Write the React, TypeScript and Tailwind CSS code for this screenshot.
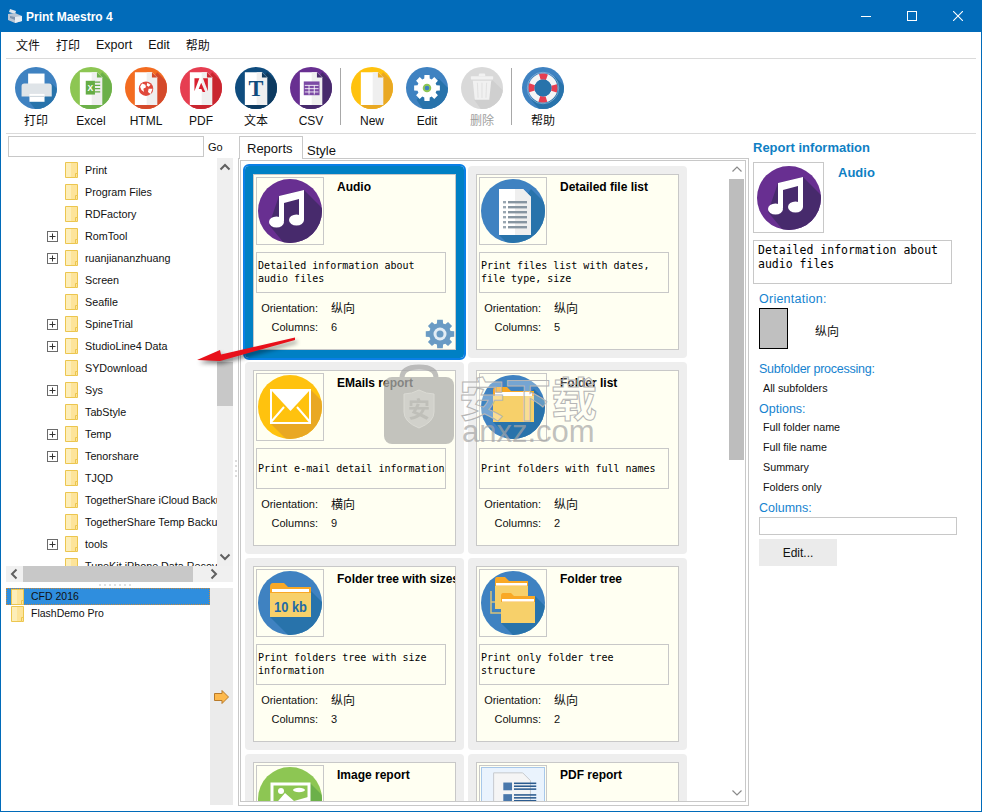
import type { ReactNode } from "react";

const UI = "font-['Liberation_Sans','Noto_Sans_CJK_SC',sans-serif]";
const MONO = "font-['DejaVu_Sans_Mono',monospace]";

const shadow = (x1: number, y1: number, x2: number, y2: number) =>
  `${x1},${y1} ${x1 + 80},${y1 + 80} ${x2 + 80},${y2 + 80} ${x2},${y2}`;

function gearPath(cx: number, cy: number, r1: number, r2: number, n: number) {
  const pts: string[] = [];
  for (let i = 0; i < n; i++) {
    const a = (i / n) * Math.PI * 2;
    const s = Math.PI / n;
    const p = (ang: number, r: number) =>
      `${(cx + Math.cos(ang) * r).toFixed(2)},${(cy + Math.sin(ang) * r).toFixed(2)}`;
    pts.push(p(a - s * 0.5, r2), p(a + s * 0.5, r2), p(a + s * 0.72, r1), p(a + s * 1.28, r1));
  }
  return `M${pts.join(" L")} Z`;
}

function Badge({ bg, size, children }: { bg: string; size: string; children: ReactNode }) {
  return (
    <div className={`${size} rounded-full overflow-hidden shrink-0`}>
      <svg viewBox="0 0 64 64" className="w-full h-full block">
        <rect width="64" height="64" fill={bg} />
        {children}
      </svg>
    </div>
  );
}

const BLUE = "#3f82c1";
const BLUE_SH = "#2873ab";

function Doc({ sh }: { sh: string }) {
  return (
    <>
      <polygon points={`49,8 ${49 + 80},88 95,138 15,58`} fill={sh} />
      <path d="M15 8H41L49 16V58H15Z" fill="#ffffff" />
      <path d="M33 8H41L49 16V58H33Z" fill="#efefef" />
      <path d="M41 8L49 16H41Z" fill={sh} />
    </>
  );
}

function PrinterIcon({ size }: { size: string }) {
  return (
    <Badge bg={BLUE} size={size}>
      <polygon points="56,25 110,79 78,125 22,53" fill={BLUE_SH} />
      <rect x="20" y="10" width="25" height="16" fill="#ffffff" />
      <path d="M10 29Q10 25 14 25H52Q56 25 56 29V45H10Z" fill="#dfe4e8" />
      <rect x="22" y="41" width="23" height="12" fill="#ffffff" />
      <rect x="22" y="44" width="23" height="1.5" fill="#c9d2d9" />
    </Badge>
  );
}

function ExcelIcon({ size }: { size: string }) {
  return (
    <Badge bg="#8dc653" size={size}>
      <Doc sh="#6cb04a" />
      <path d="M38 23H46M38 28H46M38 33H46M38 38H46" stroke="#65ad45" strokeWidth="2" />
      <rect x="24" y="21" width="14" height="21" fill="#65ad45" />
      <text x="31" y="36" textAnchor="middle" fontSize="13" fontWeight="700" fill="#fff" fontFamily="Liberation Sans">X</text>
    </Badge>
  );
}

function HtmlIcon({ size }: { size: string }) {
  return (
    <Badge bg="#f36c21" size={size}>
      <Doc sh="#d4492a" />
      <circle cx="32" cy="33" r="11" fill="#e0493c" />
      <path d="M26 25l5 2 1 4-4 2 1 5-4-3-2-5ZM34 24l5 3-3 3-3-2ZM36 33l6 0-3 8-4-3Z" fill="#fff" />
    </Badge>
  );
}

function PdfIcon({ size }: { size: string }) {
  return (
    <Badge bg="#e63e51" size={size}>
      <Doc sh="#c9262f" />
      <path d="M22 17H29.5L22 37ZM35 17H42.5V37ZM32.3 24L38.5 38H34.5L32.6 33.5H28.4Z" fill="#d8202f" />
    </Badge>
  );
}

function TextIcon({ size }: { size: string }) {
  return (
    <Badge bg="#0f4c7e" size={size}>
      <Doc sh="#0d3a60" />
      <text x="32" y="44" textAnchor="middle" fontSize="34" fontWeight="700" fill="#0f4c7e" fontFamily="Liberation Serif">T</text>
    </Badge>
  );
}

function CsvIcon({ size }: { size: string }) {
  return (
    <Badge bg="#682f91" size={size}>
      <Doc sh="#472a6c" />
      <rect x="21" y="22" width="24" height="21" fill="#7c4aa5" />
      <path d="M22.5 28h21M22.5 33h21M22.5 38h21M29 28v14M37 28v14" stroke="#fff" strokeWidth="1.3" />
    </Badge>
  );
}

function NewIcon({ size }: { size: string }) {
  return (
    <Badge bg="#ffc20e" size={size}>
      <Doc sh="#e9a823" />
    </Badge>
  );
}

function EditIcon({ size }: { size: string }) {
  return (
    <Badge bg={BLUE} size={size}>
      <polygon points="50,18 110,78 64,122 16,50" fill={BLUE_SH} />
      <path d={gearPath(32, 32, 15, 20, 8)} fill="#fff" />
      <circle cx="32" cy="32" r="6.5" fill="#8dc653" />
      <circle cx="32" cy="32" r="3.5" fill={BLUE} />
    </Badge>
  );
}

function TrashIcon({ size }: { size: string }) {
  return (
    <Badge bg="#d9d9d9" size={size}>
      <polygon points="48,20 110,80 70,120 20,50" fill="#cfcfcf" />
      <path d="M27 12Q27 10 29 10H35Q37 10 37 12V14H27Z" fill="#f1f1f1" />
      <rect x="15" y="14" width="34" height="5" rx="1" fill="#f1f1f1" />
      <path d="M18 21H46L43 50H21Z" fill="#f1f1f1" />
      <path d="M25 24l1 23M32 24v23M39 24l-1 23" stroke="#dcdcdc" strokeWidth="1.2" />
    </Badge>
  );
}

function HelpIcon({ size }: { size: string }) {
  return (
    <Badge bg={BLUE} size={size}>
      <polygon points="50,14 110,74 74,120 14,50" fill={BLUE_SH} />
      <circle cx="32" cy="32" r="24" fill="none" stroke="#9dbfdc" strokeWidth="1" />
      <circle cx="32" cy="32" r="17.5" fill="none" stroke="#f5f5f5" strokeWidth="9" />
      <circle cx="32" cy="32" r="17.5" fill="none" stroke="#e63e51" strokeWidth="9" strokeDasharray="11 16.5" strokeDashoffset="5.5" />
      <circle cx="32" cy="32" r="13" fill={BLUE_SH} />
    </Badge>
  );
}

function AudioIcon({ size }: { size: string }) {
  return (
    <Badge bg="#682f91" size={size}>
      <polygon points="21,17 46,11 100,65 60,105 11,46" fill="#472a6c" />
      <polygon points="21,17 46,11 46,41 41,41 41,20 26,24 26,42 21,42" fill="#fff" />
      <ellipse cx="18.5" cy="43" rx="7.5" ry="5.5" fill="#fff" />
      <ellipse cx="38.5" cy="41" rx="7.5" ry="5.5" fill="#fff" />
    </Badge>
  );
}

function FileListIcon({ size }: { size: string }) {
  return (
    <Badge bg={BLUE} size={size}>
      <polygon points={shadow(50, 10, 18, 56)} fill={BLUE_SH} />
      <path d="M18 10H42L50 18V56H18Z" fill="#fff" />
      <path d="M34 10H42L50 18V56H34Z" fill="#efefef" />
      {[22, 27, 32, 37, 42, 47].map((y) => (
        <g key={y}>
          <rect x="22" y={y} width="3" height="2.4" fill="#9aa7b2" />
          <rect x="27" y={y} width="19" height="2.4" fill="#8795a1" />
        </g>
      ))}
    </Badge>
  );
}

function MailIcon({ size }: { size: string }) {
  return (
    <Badge bg="#ffc20e" size={size}>
      <polygon points={shadow(52, 14, 12, 48)} fill="#e9a823" />
      <rect x="13" y="15" width="39" height="33" fill="#ffc20e" stroke="#fff" strokeWidth="2" />
      <path d="M13 15H52L32.5 36Z" fill="#fff" />
      <path d="M13 47L26 32M52 47L39 32" stroke="#fff" strokeWidth="2" />
    </Badge>
  );
}

function FolderIcon({ size }: { size: string }) {
  return (
    <Badge bg={BLUE} size={size}>
      <polygon points={shadow(53, 14, 12, 47)} fill={BLUE_SH} />
      <path d="M12 16Q12 12 15 12H26L30 16H53V30H12Z" fill="#f9a825" />
      <rect x="14" y="17" width="37" height="4" fill="#fff" />
      <path d="M12 21H53V47H12Z" fill="#f7d06a" />
    </Badge>
  );
}

function SizeFolderIcon({ size }: { size: string }) {
  return (
    <Badge bg={BLUE} size={size}>
      <polygon points={shadow(53, 20, 12, 46)} fill={BLUE_SH} />
      <path d="M12 16Q12 12 15 12H26L30 16H53V30H12Z" fill="#f9a825" />
      <rect x="14" y="18" width="37" height="3" fill="#fff" />
      <path d="M12 22H53V46H12Z" fill="#f7d06a" />
      <text x="16" y="41" fontSize="15" fontWeight="700" fill="#1f6aa5" fontFamily="Liberation Sans" textLength="33" lengthAdjust="spacingAndGlyphs">10 kb</text>
    </Badge>
  );
}

function TreeIcon({ size }: { size: string }) {
  return (
    <Badge bg={BLUE} size={size}>
      <polygon points={shadow(54, 25, 20, 52)} fill={BLUE_SH} />
      <path d="M10 20V42H20M10 31H15" stroke="#d9c27a" strokeWidth="1.5" fill="none" />
      <path d="M14 9Q14 6 16 6H24L28 10H47V24H14Z" fill="#f9a825" />
      <rect x="15" y="12" width="31" height="2.6" fill="#fff" />
      <path d="M14 15H47V38H14Z" fill="#f7d06a" />
      <path d="M20 25Q20 22 22 22H30L33 25H54V38H20Z" fill="#f9a825" />
      <rect x="21" y="28" width="32" height="2.6" fill="#fff" />
      <path d="M20 31H54V52H20Z" fill="#f7d06a" />
    </Badge>
  );
}

function ImageIcon({ size }: { size: string }) {
  return (
    <Badge bg="#8dc653" size={size}>
      <polygon points={shadow(52, 16, 14, 50)} fill="#6cb04a" />
      <rect x="14" y="17" width="37" height="33" fill="#8dc653" stroke="#fff" strokeWidth="3" />
      <circle cx="23" cy="24" r="3" fill="#fff" />
      <ellipse cx="41" cy="23" rx="6" ry="2.2" fill="#fff" />
      <path d="M15 40L27 26L36 34L50 30V49H15Z" fill="#fff" />
    </Badge>
  );
}

function PdfReportIcon() {
  return (
    <div className="w-[64px] h-[64px] shrink-0 border border-[#a8c8ea] bg-[#eaf3fd]">
      <svg viewBox="0 0 64 64" className="w-full h-full block">
        <path d="M12 5H42L50 13V64H12Z" fill="#f5f5f5" stroke="#c4c8cc" strokeWidth="1" />
        {[15, 27].map((y) => (
          <g key={y}>
            <rect x="22" y={y} width="9" height="8" fill="#4a78ab" />
            <rect x="33" y={y} width="23" height="1.6" fill="#2b5b8f" />
            <rect x="33" y={y + 3} width="23" height="1.6" fill="#2b5b8f" />
            <rect x="33" y={y + 6} width="23" height="1.6" fill="#2b5b8f" />
          </g>
        ))}
      </svg>
    </div>
  );
}

function TreeFolder() {
  return (
    <svg width="13" height="16" viewBox="0 0 13 16" className="shrink-0 block">
      <path d="M.5.5H12.5V12.5L10.5 15.5H.5Z" fill="#fde49a" stroke="#ecc64f" />
      <rect x="1" y="1" width="5" height="14" fill="#fdeeb9" />
      <path d="M10.5 11.5H12.5V15.5H10.5Z" fill="#fde49a" stroke="#ecc64f" />
    </svg>
  );
}

function Plus() {
  return (
    <svg width="11" height="11" viewBox="0 0 11 11" className="block">
      <rect x=".5" y=".5" width="10" height="10" fill="#fff" stroke="#6b6b6b" />
      <path d="M2.5 5.5H8.5M5.5 2.5V8.5" stroke="#333" />
    </svg>
  );
}

function Chevron({ dir, thin }: { dir: "up" | "down" | "left" | "right"; thin?: boolean }) {
  const d = {
    up: "M1.5 7.5L6 3L10.5 7.5",
    down: "M1.5 4.5L6 9L10.5 4.5",
    left: "M7.5 1.5L3 6L7.5 10.5",
    right: "M4.5 1.5L9 6L4.5 10.5",
  }[dir];
  return (
    <svg width="12" height="12" viewBox="0 0 12 12" className="block">
      <path d={d} fill="none" stroke={thin ? "#8a8a8a" : "#606060"} strokeWidth={thin ? 1.2 : 2} />
    </svg>
  );
}

const tools = [
  [
    { label: "打印", Icon: PrinterIcon },
    { label: "Excel", Icon: ExcelIcon },
    { label: "HTML", Icon: HtmlIcon },
    { label: "PDF", Icon: PdfIcon },
    { label: "文本", Icon: TextIcon },
    { label: "CSV", Icon: CsvIcon },
  ],
  [
    { label: "New", Icon: NewIcon },
    { label: "Edit", Icon: EditIcon },
    { label: "删除", Icon: TrashIcon, disabled: true },
  ],
  [{ label: "帮助", Icon: HelpIcon }],
];

const folders: [string, boolean][] = [
  ["Print", false],
  ["Program Files", false],
  ["RDFactory", false],
  ["RomTool", true],
  ["ruanjiananzhuang", true],
  ["Screen", false],
  ["Seafile", false],
  ["SpineTrial", true],
  ["StudioLine4 Data", true],
  ["SYDownload", false],
  ["Sys", true],
  ["TabStyle", false],
  ["Temp", true],
  ["Tenorshare", true],
  ["TJQD", false],
  ["TogetherShare iCloud Backup", false],
  ["TogetherShare Temp Backup", false],
  ["tools", true],
  ["TuneKit iPhone Data Recovery", false],
];

const reports = [
  { title: "Audio", desc: "Detailed information about audio files", o: "纵向", c: "6", icon: <AudioIcon size="w-[64px] h-[64px]" />, selected: true },
  { title: "Detailed file list", desc: "Print files list with dates, file type, size", o: "纵向", c: "5", icon: <FileListIcon size="w-[64px] h-[64px]" /> },
  { title: "EMails report", desc: "Print e-mail detail information", o: "横向", c: "9", icon: <MailIcon size="w-[64px] h-[64px]" /> },
  { title: "Folder list", desc: "Print folders with full names", o: "纵向", c: "2", icon: <FolderIcon size="w-[64px] h-[64px]" /> },
  { title: "Folder tree with sizes", desc: "Print folders tree with size information", o: "纵向", c: "3", icon: <SizeFolderIcon size="w-[64px] h-[64px]" /> },
  { title: "Folder tree", desc: "Print only folder tree structure", o: "纵向", c: "2", icon: <TreeIcon size="w-[64px] h-[64px]" /> },
  { title: "Image report", desc: "", o: "", c: "", icon: <ImageIcon size="w-[64px] h-[64px]" /> },
  { title: "PDF report", desc: "", o: "", c: "", icon: <PdfReportIcon /> },
];

function ReportCard({ r }: { r: (typeof reports)[number] }) {
  return (
    <div
      className={`h-[192px] p-[8px] rounded-[4px] ${
        r.selected ? "bg-[#0080c4] outline-2 outline-[#0a7fe6]" : "bg-[#eeeeee]"
      }`}
    >
      <div className="relative h-[176px] border border-[#c8c8c8] bg-[#fffff2] p-[2px] overflow-hidden">
        <div className="flex">
          <div className="w-[68px] h-[68px] border border-[#c8c8c8] flex items-center justify-center shrink-0">
            {r.icon}
          </div>
          <div className="ml-[13px] pt-[3px] text-[12px] leading-[14px] font-bold text-black whitespace-nowrap">
            {r.title}
          </div>
        </div>
        <div className={`mt-[7px] w-[190px] h-[41px] border border-[#c8c8c8] pl-[1px] pb-[1px] flex items-center text-[10px] leading-[13px] text-black ${MONO}`}>
          {r.desc}
        </div>
        <div className="mt-[6px] flex h-[19px] items-center text-[11px] text-[#111]">
          <span className="w-[62px] text-right">Orientation:</span>
          <span className="ml-[13px] text-[12px]">{r.o}</span>
        </div>
        <div className="flex h-[19px] items-center text-[11px] text-[#111]">
          <span className="w-[62px] text-right">Columns:</span>
          <span className="ml-[13px]">{r.c}</span>
        </div>
        {r.selected && (
          <svg width="30" height="30" viewBox="0 0 30 30" className="absolute right-0 bottom-0">
            <path d={gearPath(15, 15, 11, 14.5, 8)} fill="#6a9bc4" />
            <circle cx="15" cy="15" r="6.5" fill="#e3edf5" />
            <circle cx="15" cy="15" r="3.5" fill="#6a9bc4" />
          </svg>
        )}
      </div>
    </div>
  );
}

export default function App() {
  return (
    <div className={`relative w-[982px] h-[812px] bg-white border-x border-b border-[#016bb9] overflow-hidden flex flex-col text-[12px] text-[#111] ${UI}`}>
      {/* title bar */}
      <div className="h-[32px] shrink-0 bg-[#016bb9] flex items-center text-white">
        <svg width="16" height="16" viewBox="0 0 16 16" className="ml-[6px]">
          <path d="M3 1L9 3L8 6L2 4Z" fill="#dfe6ee" />
          <path d="M1 6L8 5L15 8V13L8 15L1 12Z" fill="#b9c5d4" />
          <path d="M8 9L15 8V13L8 15Z" fill="#e8edf3" />
          <path d="M3 8L8 9V12L3 10Z" fill="#7f93ad" />
        </svg>
        <span className="ml-[3px] pt-[2px] text-[12px] font-bold">Print Maestro 4</span>
        <div className="ml-auto flex items-center">
          <div className="w-[46px] flex justify-center">
            <div className="w-[10px] h-px bg-white" />
          </div>
          <div className="w-[46px] flex justify-center">
            <div className="w-[10px] h-[10px] border border-white" />
          </div>
          <div className="w-[46px] flex justify-center">
            <svg width="10" height="10" viewBox="0 0 10 10" className="block">
              <path d="M0 0L10 10M10 0L0 10" stroke="#fff" strokeWidth="1.1" />
            </svg>
          </div>
        </div>
      </div>

      {/* menu and toolbar */}
      <div className="mx-[5px] h-[27px] shrink-0 border-b border-[#dadada] px-[10px] pt-px flex items-center gap-4 text-[12px]">
        <span>文件</span>
        <span>打印</span>
        <span className="text-[12.5px]">Export</span>
        <span className="text-[12.5px]">Edit</span>
        <span>帮助</span>
      </div>
      <div className="mx-[5px] h-[75px] shrink-0 border-b border-[#dadada] pl-[9px] pt-[8px] flex items-start">
        {tools.map((group, i) => (
          <div key={i} className="flex items-start">
            {i > 0 && <div className="w-px h-[57px] mt-px ml-[8px] mr-[10px] bg-[#a8a8a8]" />}
            <div className="flex gap-[13px]">
              {group.map((t) => (
                <div key={t.label} className="w-[42px] flex flex-col items-center">
                  <t.Icon size="w-[42px] h-[42px]" />
                  <span className={`mt-[4px] leading-[16px] whitespace-nowrap ${t.disabled ? "text-[#a0a0a0]" : ""}`}>{t.label}</span>
                </div>
              ))}
            </div>
          </div>
        ))}
      </div>

      <div className="flex-1 flex min-h-0">
        {/* folder tree */}
        <div className="w-[232px] shrink-0 pl-[5px] flex flex-col">
          <div className="h-[24px] shrink-0 flex pt-[2px] pl-[2px]">
            <div className="w-[196px] h-[21px] border border-[#c8c8c8]" />
            <span className="ml-[4px] leading-[22px] text-[11px]">Go</span>
          </div>
          <div className="h-[408px] shrink-0 flex">
            <div className="w-[211px] pt-px overflow-hidden">
              {folders.map(([name, plus]) => (
                <div key={name} className="h-[22px] flex items-center whitespace-nowrap text-[10.75px]">
                  <div className="ml-[41px] w-[11px] shrink-0">{plus && <Plus />}</div>
                  <div className="ml-[7px] shrink-0">
                    <TreeFolder />
                  </div>
                  <span className="ml-[7px] shrink-0">{name}</span>
                </div>
              ))}
            </div>
            <div className="w-[16px] bg-[#efefef] flex flex-col items-center">
              <div className="h-[20px] flex items-center">
                <Chevron dir="up" />
              </div>
              <div className="mt-[184px] w-full h-[44px] bg-[#c8c8c8]" />
              <div className="mt-auto h-[20px] flex items-center">
                <Chevron dir="down" />
              </div>
            </div>
          </div>
          <div className="h-[16px] shrink-0 bg-[#f0f0f0] flex items-center">
            <div className="w-[17px] flex justify-center">
              <Chevron dir="left" />
            </div>
            <div className="w-[170px] h-full bg-[#c8c8c8]" />
            <div className="ml-auto w-[40px] flex justify-center">
              <Chevron dir="right" />
            </div>
          </div>
          <div className="h-[6px] shrink-0 flex justify-center gap-[3px] pt-[2px] pr-[10px]">
            {[0, 1, 2, 3, 4, 5, 6].map((d) => (
              <div key={d} className="w-[2px] h-[2px] bg-[#e0e0e0]" />
            ))}
          </div>
          <div className="h-[217px] shrink-0 flex text-[10.5px]">
            <div className="w-[204px]">
              <div className="h-[17px] bg-[#2f8ede] border border-dotted border-[#c98a3c] flex items-center pl-[4px]">
                <TreeFolder />
                <span className="ml-[7px]">CFD 2016</span>
              </div>
              <div className="h-[17px] flex items-center pl-[5px]">
                <TreeFolder />
                <span className="ml-[7px]">FlashDemo Pro</span>
              </div>
            </div>
            <div className="flex-1 bg-[#ebebeb] flex items-center justify-center">
              <svg width="15" height="14" viewBox="0 0 15 14" className="block">
                <path d="M.5 3.5H8V.5L14.5 7L8 13.5V10.5H.5Z" fill="#fdb94d" stroke="#b87a2a" />
              </svg>
            </div>
          </div>
        </div>

        {/* splitter */}
        <div className="w-[5px] shrink-0 flex flex-col items-center gap-[3px] pt-[326px]">
          {[0, 1, 2, 3].map((d) => (
            <div key={d} className="w-[2px] h-[2px] bg-[#dcdcdc]" />
          ))}
        </div>

        {/* reports */}
        <div className="w-[511px] shrink-0 flex flex-col">
          <div className="h-[24px] shrink-0 flex items-end">
            <div className="relative z-10 ml-px w-[64px] h-[23px] -mb-px border border-b-0 border-[#c8c8c8] bg-white text-[13px] leading-[23px] pl-[7px]">
              Reports
            </div>
            <span className="ml-[4px] text-[13px] leading-[14px]">Style</span>
          </div>
          <div className="h-[648px] shrink-0 border border-[#c8c8c8] pt-px pl-px pr-[2px] pb-[3px]">
            <div className="h-full border border-[#c8c8c8] flex overflow-hidden">
              <div className="grid grid-cols-[219px_219px] gap-[4px] content-start pl-[4px] pt-[5px] h-[900px]">
                {reports.map((r) => (
                  <ReportCard key={r.title} r={r} />
                ))}
              </div>
              <div className="ml-auto mr-px w-[15px] shrink-0 flex flex-col items-center">
                <div className="h-[18px] flex items-center">
                  <Chevron dir="up" thin />
                </div>
                <div className="w-full h-[281px] bg-[#bdbdbd]" />
                <div className="mt-auto h-[18px] flex items-center">
                  <Chevron dir="down" thin />
                </div>
              </div>
            </div>
          </div>
        </div>

        {/* report information */}
        <div className="flex-1 pl-[4px] flex flex-col">
          <div className="mt-[6px] text-[13px] leading-[16px] font-bold text-[#0f7fc4]">Report information</div>
          <div className="mt-[6px] flex">
            <div className="w-[71px] h-[71px] border border-[#c8c8c8] flex items-center justify-center">
              <AudioIcon size="w-[64px] h-[64px]" />
            </div>
            <div className="ml-[14px] pt-[3px] text-[13px] leading-[16px] font-bold text-[#0f7fc4]">Audio</div>
          </div>
          <div className={`mt-[7px] w-[199px] h-[44px] border border-[#c8c8c8] px-[4px] pt-[2px] text-[11.5px] leading-[14px] text-black ${MONO}`}>
            Detailed information about audio files
          </div>
          <div className="ml-[6px] flex flex-col">
            <div className="mt-[7px] h-[16px] leading-[16px] text-[12.5px] tracking-[0.25px] text-[#1583d0]">Orientation:</div>
            <div className="mt-px flex">
              <div className="w-[29px] h-[41px] bg-[#c0c0c0] border border-black" />
              <span className="ml-[27px] mt-[16px] leading-[16px]">纵向</span>
            </div>
            <div className="mt-[12px] h-[16px] leading-[16px] text-[12.5px] tracking-[-0.25px] text-[#1583d0]">Subfolder processing:</div>
            <div className="mt-[3px] ml-[4px] h-[16px] leading-[16px] text-[10.75px]">All subfolders</div>
            <div className="mt-[5px] h-[16px] leading-[16px] text-[12.5px] text-[#1583d0]">Options:</div>
            {["Full folder name", "Full file name", "Summary", "Folders only"].map((o) => (
              <div key={o} className="ml-[4px] h-[20px] leading-[20px] text-[10.75px]">
                {o}
              </div>
            ))}
            <div className="mt-[3px] h-[16px] leading-[16px] text-[12.5px] text-[#1583d0]">Columns:</div>
            <div className="mt-px w-[198px] h-[18px] border border-[#c8c8c8]" />
            <div className="mt-[4px] w-[78px] h-[27px] bg-[#ebebeb] flex items-center justify-center">Edit...</div>
          </div>
        </div>
      </div>

      {/* arrow drawn over the screenshot */}
      <svg width="120" height="40" viewBox="0 0 120 40" className="absolute left-[189px] top-[330px] drop-shadow-[2px_3px_2px_rgba(0,0,0,0.45)]">
        <polygon points="7,30 30,20 31,24.5 105,7.5 105,10 30,31" fill="#e8101a" />
      </svg>

      {/* download site watermark */}
      <svg width="74" height="82" viewBox="0 0 74 82" className="absolute left-[381px] top-[364px] opacity-75">
        <path d="M20 18V14Q20 3 37 3Q54 3 54 14V18" fill="none" stroke="#aaaaaa" strokeWidth="5" />
        <rect x="2" y="13" width="70" height="67" rx="8" fill="#b0b0ac" />
        <path d="M22 30Q30 30 37 26Q44 30 52 30V48Q52 58 37 64Q22 58 22 48Z" fill="#c2c2be" stroke="#cfcfcb" />
        <text x="37" y="53" textAnchor="middle" fontSize="22" fontWeight="700" fill="#aaaaa6" fontFamily="Noto Sans CJK SC">安</text>
      </svg>
      <div className="absolute left-[458px] top-[372px] text-[46px] leading-[56px] font-bold whitespace-nowrap text-white/30 [-webkit-text-stroke:1px_#b5b5b5]">
        安下载
      </div>
      <div className="absolute left-[461px] top-[414px] text-[31px] leading-[36px] whitespace-nowrap text-[#a5a5a5]/70">anxz.com</div>
    </div>
  );
}
